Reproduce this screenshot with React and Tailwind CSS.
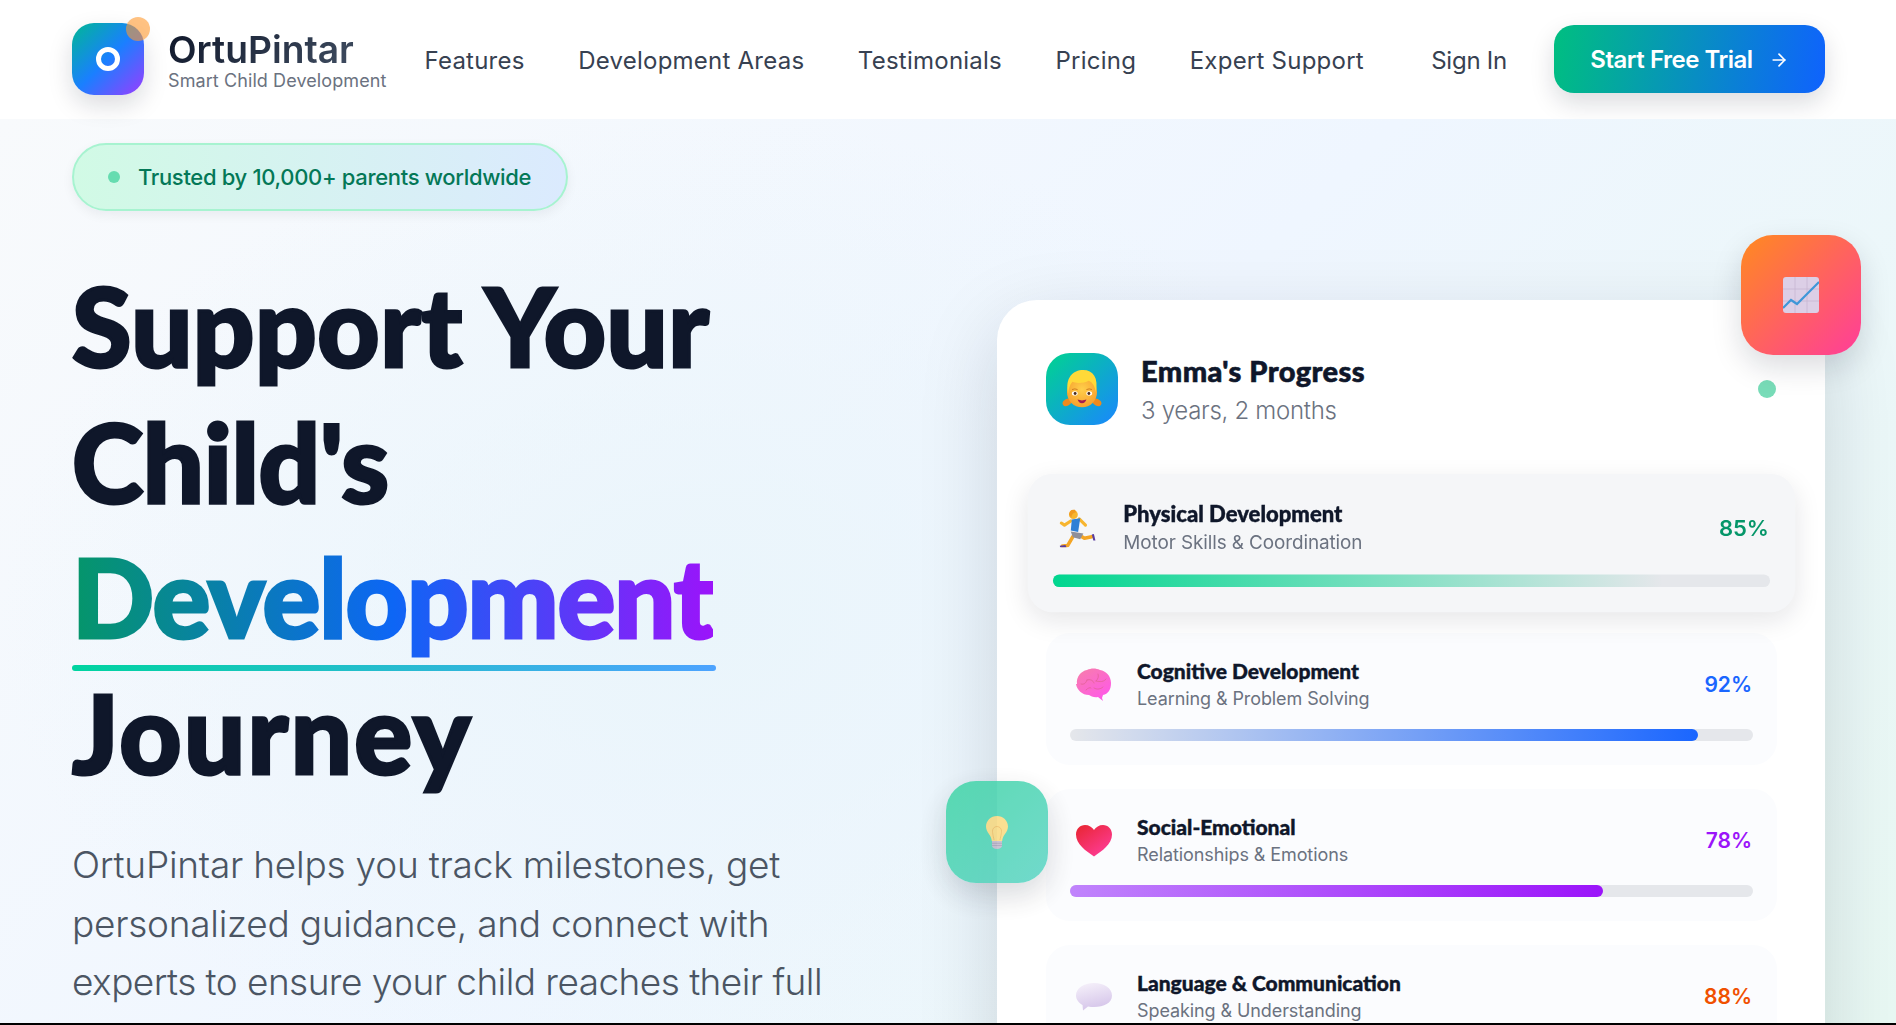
import React from "react";
import { ArrowRight } from "lucide-react";

const body = "font-['Inter','Liberation_Sans',sans-serif]";
const display = "font-['Lato','Liberation_Sans',sans-serif]";

function Girl() {
  return (
    <svg width="40" height="40" viewBox="0 0 36 36">
      <defs>
        <radialGradient id="gface" cx="50%" cy="40%" r="60%">
          <stop offset="0%" stopColor="#ffcf4a" />
          <stop offset="100%" stopColor="#f7a02e" />
        </radialGradient>
      </defs>
      <ellipse cx="4.5" cy="30" rx="4.2" ry="3" fill="#f08a1d" transform="rotate(-30 4.5 30)" />
      <ellipse cx="31.5" cy="30" rx="4.2" ry="3" fill="#f08a1d" transform="rotate(30 31.5 30)" />
      <circle cx="18" cy="21" r="13.5" fill="url(#gface)" />
      <path d="M5.5 22C2.500 8 10 1 19 1c9 0 14 7 11.500 20-1-6-3-9-6.500-10.500C20 13 12 13 9.500 11.500 7 14 6 18 5.500 22z" fill="#ffd938" />
      <ellipse cx="11.500" cy="22" rx="2.600" ry="1.900" fill="#fff" />
      <ellipse cx="24.500" cy="22" rx="2.600" ry="1.900" fill="#fff" />
      <circle cx="11.800" cy="22" r="1.300" fill="#4b2b1c" />
      <circle cx="24.200" cy="22" r="1.300" fill="#4b2b1c" />
      <path d="M9 18.500q2.500-1.200 5 0M22 18.500q2.500-1.200 5 0" stroke="#c9741e" strokeWidth="0.800" fill="none" />
      <path d="M14 27.500q4 1.500 8 0q-1 3.300-4 3.300t-4-3.300z" fill="#a51d4f" />
    </svg>
  );
}

function Runner() {
  return (
    <svg width="36" height="36" viewBox="0 0 36 36">
      <path d="M13 26L8 34.500L3 35" stroke="#f4a524" strokeWidth="3.400" fill="none" strokeLinecap="round" strokeLinejoin="round" />
      <path d="M20 25L24 27.500L31 26" stroke="#f4a524" strokeWidth="3.400" fill="none" strokeLinecap="round" strokeLinejoin="round" />
      <path d="M11 11L5 15L2 13" stroke="#f7b52f" strokeWidth="3" fill="none" strokeLinecap="round" strokeLinejoin="round" />
      <path d="M19 9L25 15" stroke="#f7b52f" strokeWidth="3" fill="none" strokeLinecap="round" />
      <path d="M0.500 34.500L6 34l1 2.500H1z" fill="#5a3d9e" />
      <path d="M31 24l2-.500 1.500 6-2 0z" fill="#5a3d9e" />
      <path d="M11 21L23 23L20 28.500L13 26.500z" fill="#8f8f99" />
      <path d="M12 9.500L20 8.500L18 21.500L11 20z" fill="#2f80d6" />
      <circle cx="13.500" cy="5" r="4.200" fill="#f7b52f" />
      <path d="M9.500 5c0-4 3-5 5.500-4.800L16 3C13 3 12 5 11.500 8z" fill="#f09a20" />
    </svg>
  );
}

function Brain() {
  return (
    <svg width="36" height="34" viewBox="0 0 36 34">
      <defs>
        <linearGradient id="brain" x1="0" y1="0" x2="0.700" y2="1">
          <stop offset="0%" stopColor="#f77fa8" />
          <stop offset="100%" stopColor="#ff59e8" />
        </linearGradient>
      </defs>
      <path d="M1 16C0 9 5 3 11 2c4-2 9-2 13 0 6 1 11 6 11 13 0 7-3 11-8 12l-1 3 1 3-5-4c-4 1-7-1-9-2-7 0-12-5-13-11z" fill="url(#brain)" />
      <path d="M5 16c3 1 5-1 6-4M11 12c3-1 6 0 7 3M22 6c1 3 0 5-2 7M20 13c4 1 8 1 10-2M18 20c3 2 7 1 9-1M10 22c2-2 4-3 5-2" stroke="#e0608f" strokeWidth="0.700" fill="none" strokeLinecap="round" />
    </svg>
  );
}

function Heart() {
  return (
    <svg width="36" height="32" viewBox="0 0 36 32">
      <defs>
        <linearGradient id="heart" x1="0" y1="0" x2="0.800" y2="1">
          <stop offset="0%" stopColor="#e8252f" />
          <stop offset="100%" stopColor="#ff3d9a" />
        </linearGradient>
      </defs>
      <path d="M18 31.500C10 26 0 19 0 9.500 0 4 4 0 9 0c4 0 7 2 9 5 2-3 5-5 9-5 5 0 9 4 9 9.500C36 19 26 26 18 31.500z" fill="url(#heart)" />
    </svg>
  );
}

function Bubble() {
  return (
    <svg width="36" height="30" viewBox="0 0 36 30">
      <defs>
        <linearGradient id="bubble" x1="0" y1="0" x2="0.300" y2="1">
          <stop offset="0%" stopColor="#f7f3fb" />
          <stop offset="100%" stopColor="#d6c6ea" />
        </linearGradient>
      </defs>
      <path d="M18 1c10 0 18 5 18 12.500S28 25 18 25c-2 0-4 0-6-.500L7 28.500 6.500 23C3 21 0 17.500 0 13.500 0 6 8 1 18 1z" fill="url(#bubble)" />
    </svg>
  );
}

function Bulb() {
  return (
    <svg width="22" height="33" viewBox="0 0 22 33">
      <path d="M11 0C4.900 0 0 4.700 0 10.500c0 6 5.500 8.500 5.800 14.500h10.400c.3-6 5.800-8.500 5.800-14.500C22 4.700 17.100 0 11 0z" fill="#f9d877" />
      <path d="M8 24c-1-5-1.500-7-1.500-9a4.500 4.500 0 0 1 9 0c0 2-.5 4-1.500 9" stroke="#eab04f" strokeWidth="0.800" fill="none" />
      <path d="M6 25h10v5c0 1.500-2 3-5 3s-5-1.500-5-3z" fill="#bdb5c9" />
      <path d="M6 27.300h10M6 29.500h10" stroke="#948ca8" strokeWidth="0.700" />
    </svg>
  );
}

function Chart() {
  return (
    <svg width="36" height="36" viewBox="0 0 36 36">
      <rect width="36" height="36" rx="3" fill="#dccfe6" />
      <path d="M0 12h36M0 24h36M12 0v36M24 0v36" stroke="#c6b6d2" strokeWidth="0.800" />
      <path d="M0 31L8 23L14 27L23 18L36 5" stroke="#3f97d8" strokeWidth="2.200" fill="none" />
    </svg>
  );
}

function Item({ icon, title, sub, pct, pctClass, barClass, width, active }) {
  return (
    <div
      className={
        active
          ? "scale-[1.05] rounded-[24px] bg-[#f5f6f8] p-6 shadow-[0_8px_24px_rgba(15,23,42,0.1)]"
          : "rounded-[24px] bg-[#fbfcfe] p-6"
      }
    >
      <div className="flex items-center">
        <div className="flex h-[56px] w-[50px] shrink-0 items-center justify-center pr-[3px]">{icon}</div>
        <div className="ml-[17px] flex-1">
          <div className={`${display} text-[21px] leading-[28px] font-black text-[#0f172a] [-webkit-text-stroke:0.4px_#0f172a]`}>{title}</div>
          <div className={`${body} text-[18px] leading-[28px] tracking-[-0.005em] text-[#6b7280]`}>{sub}</div>
        </div>
        <div className={`${body} mr-[1px] text-[21px] leading-[28px] font-semibold ${pctClass}`}>{pct}</div>
      </div>
      <div className="mt-4 h-3 rounded-full bg-[#e5e7eb]">
        <div className={`h-3 rounded-full ${barClass}`} style={{ width }} />
      </div>
    </div>
  );
}

export default function App() {
  return (
    <div className={`${body} flex h-[1025px] flex-col overflow-hidden border-b-2 border-black bg-white`}>
      <nav className="flex h-[119px] shrink-0 items-center bg-white pr-[71px] pb-[1px] pl-[72px]">
        <div className="flex items-center">
          <div className="relative flex h-[72px] w-[72px] items-center justify-center rounded-[22px] bg-[linear-gradient(135deg,#00b894_0%,#1a7fff_50%,#9b3cff_100%)] shadow-[0_10px_25px_rgba(15,23,42,0.15)]">
            <div className="h-6 w-6 rounded-full border-[5px] border-white" />
            <div className="absolute top-[-6px] right-[-6px] h-6 w-6 rounded-full bg-[#ff9a2e] opacity-60" />
          </div>
          <div className="ml-[24px]">
            <div className="mt-[2px] bg-[linear-gradient(135deg,#0f172a,#475569)] bg-clip-text text-[37.2px] leading-[42px] font-semibold text-transparent">
              OrtuPintar
            </div>
            <div className="mt-[-1px] text-[18px] leading-[22px] tracking-[0.005em] text-[#6b7280]">Smart Child Development</div>
          </div>
        </div>
        <div className="mt-[3px] ml-[38px] flex flex-1 items-center gap-[53.5px] text-[24px] tracking-[0.01em] text-[#374151]">
          <span>Features</span>
          <span>Development Areas</span>
          <span>Testimonials</span>
          <span>Pricing</span>
          <span>Expert Support</span>
        </div>
        <span className="mt-[3px] mr-[47px] text-[24px] tracking-[-0.01em] text-[#374151]">Sign In</span>
        <button className="flex h-[68px] w-[271px] items-center justify-center gap-4 rounded-[20px] bg-[linear-gradient(100deg,#00bf80,#0f62fe)] pt-[2px] text-[24px] font-semibold tracking-[-0.02em] text-white shadow-[0_10px_25px_rgba(15,23,42,0.15)]">
          Start Free Trial
          <ArrowRight size={20} />
        </button>
      </nav>

      <main className="flex flex-1 gap-[97px] overflow-hidden bg-[radial-gradient(ellipse_700px_500px_at_700px_500px,#eaf5fb_0%,transparent_100%),linear-gradient(135deg,#f8fafc_0%,#eff6ff_50%,#e8f8f3_100%)] pr-[71px] pl-[72px]">
        <section className="w-[828px] shrink-0 pt-6">
          <div className="inline-flex h-[68px] w-[496px] items-center rounded-full border-2 border-[#a7f3d0] bg-[linear-gradient(90deg,#d1fae5,#dbeafe)] pl-[34px] text-[22px] font-medium tracking-[-0.015em] text-[#047857] shadow-[0_4px_12px_rgba(15,23,42,0.06)]">
            <span className="mr-[18px] h-3 w-3 rounded-full bg-[#66dcb0]" />
            Trusted by 10,000+ parents worldwide
          </div>
          <h1 className={`${display} mt-[47px] text-[108px] leading-[135.5px] font-black text-[#0f172a] [-webkit-text-stroke-width:3px]`}>
            <div className="tracking-[0.005em]">Support Your</div>
            <div className="tracking-[-0.003em]">Child's</div>
            <div className="relative inline-block w-[644px] tracking-[-0.01em]">
              <span className="bg-[linear-gradient(90deg,#059669_0%,#0d66f5_50%,#9b14fa_100%)] bg-clip-text text-transparent">Development</span>
              <span className="absolute bottom-[-6px] left-0 h-[6px] w-full rounded-full bg-[linear-gradient(90deg,#00d4a0,#4da3ff)]" />
            </div>
            <div className="tracking-[0.022em]">Journey</div>
          </h1>
          <p className="mt-[36px] text-[37px] leading-[58.6px] font-light text-[#4b5563]">
            <span className="block tracking-[-0.006em]">OrtuPintar helps you track milestones, get</span>
            <span className="block tracking-[-0.007em]">personalized guidance, and connect with</span>
            <span className="block tracking-[-0.015em]">experts to ensure your child reaches their full</span>
          </p>
        </section>

        <section className="relative mt-[181px] h-[1000px] w-[828px] shrink-0 rounded-[40px] bg-white pt-[53px] pr-[48px] pl-[49px] shadow-[0_25px_80px_rgba(15,23,42,0.15)]">
          <div className="absolute top-[-65px] right-[-36px] z-10 flex h-[120px] w-[120px] items-center justify-center rounded-[32px] bg-[linear-gradient(135deg,#ff8a1f,#ff3d9a)] shadow-[0_12px_30px_rgba(15,23,42,0.15)]">
            <Chart />
          </div>
          <div className="absolute top-[481px] left-[-51px] z-10 flex h-[102px] w-[102px] items-center justify-center rounded-[30px] bg-[linear-gradient(135deg,#34d3a0,#4fd0c0)] opacity-80 shadow-[0_12px_30px_rgba(15,23,42,0.2)]">
            <Bulb />
          </div>
          <div className="flex items-start">
            <div className="flex h-[72px] w-[72px] items-center justify-center rounded-[24px] bg-[linear-gradient(135deg,#00d48f,#1a86ff)]">
              <Girl />
            </div>
            <div className="ml-[23px]">
              <div className={`${display} text-[29px] leading-[36px] font-black tracking-[0.015em] text-[#0f172a] [-webkit-text-stroke:0.6px_#0f172a]`}>Emma's Progress</div>
              <div className="mt-[4px] text-[24px] leading-[36px] font-light tracking-[-0.012em] text-[#6b7280]">3 years, 2 months</div>
            </div>
            <div className="mt-[27px] mr-[1px] ml-auto h-[18px] w-[18px] rounded-full bg-[#78dcb8]" />
          </div>
          <div className="mt-[48px] flex flex-col gap-6">
            <Item active icon={<Runner />} title="Physical Development" sub="Motor Skills & Coordination" pct="85%" pctClass="text-[#059669]" barClass="bg-[linear-gradient(90deg,#00d68f,transparent)]" width="85%" />
            <Item icon={<Brain />} title="Cognitive Development" sub="Learning & Problem Solving" pct="92%" pctClass="text-[#1a66ff]" barClass="bg-[linear-gradient(90deg,transparent,#1a66ff)]" width="92%" />
            <Item icon={<Heart />} title="Social-Emotional" sub="Relationships & Emotions" pct="78%" pctClass="text-[#9b14fa]" barClass="bg-[linear-gradient(90deg,#c084fc,#9b14fa)]" width="78%" />
            <Item icon={<Bubble />} title="Language & Communication" sub="Speaking & Understanding" pct="88%" pctClass="text-[#f05000]" barClass="bg-[linear-gradient(90deg,#f97316,#f05000)]" width="88%" />
          </div>
        </section>
      </main>
    </div>
  );
}
